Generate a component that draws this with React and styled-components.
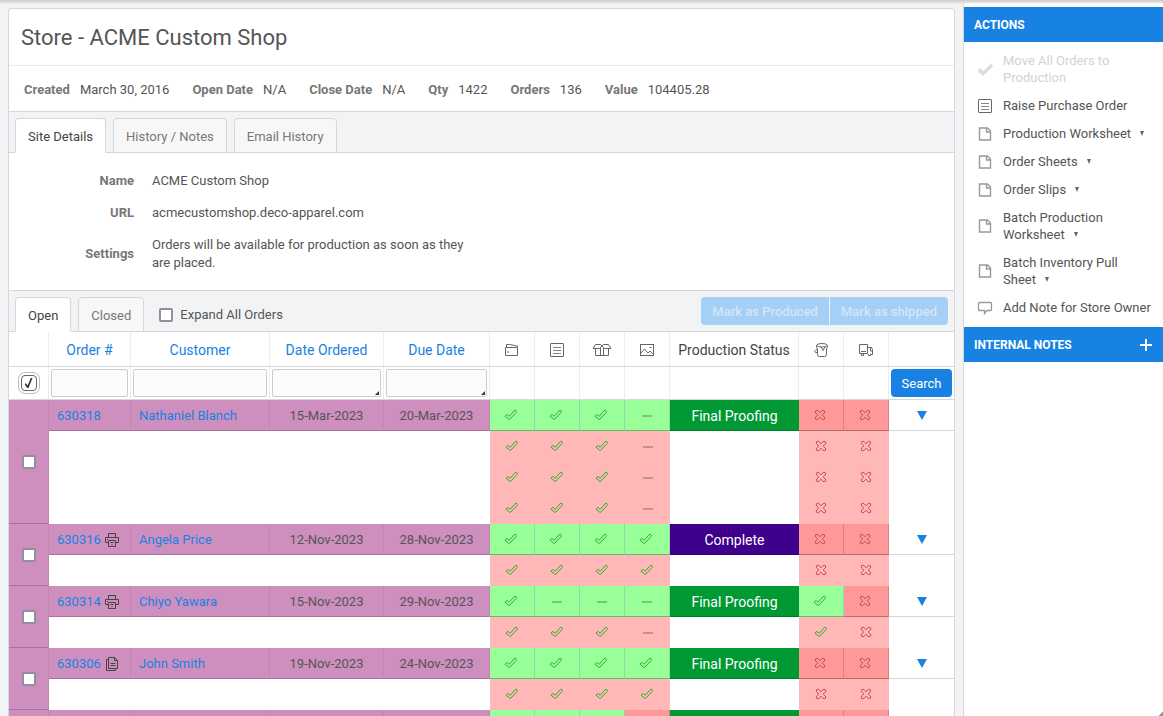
import React from "react";
import styled, { createGlobalStyle } from "styled-components";

const c = {
  page: "#f2f3f5",
  line: "#d5d7da",
  soft: "#ececee",
  text: "#555",
  label: "#777",
  blue: "#1882e3",
  purple: "#ce8fbe",
  green: "#99ff99",
  red: "#ff9999",
  pink: "#ffb7b7",
};

const GlobalStyle = createGlobalStyle`
  *, *::before, *::after { box-sizing: border-box; }
  body {
    margin: 0;
    background: ${c.page};
    color: ${c.text};
    font: 13px/18px Roboto, "Liberation Sans", sans-serif;
  }
  button, input { font: inherit; }
  a { color: ${c.blue}; text-decoration: none; }
`;

const Page = styled.div`
  display: flex;
  height: 100vh;
  overflow: hidden;
  position: relative;
`;

const TopShade = styled.div`
  position: absolute;
  inset: 0 0 auto 0;
  height: 4px;
  background: linear-gradient(#cdced0, #d6d7d9 40%, rgba(225, 226, 228, 0));
`;

const Corner = styled.div`
  position: absolute;
  right: 0;
  bottom: 0;
  width: 5px;
  height: 5px;
  background: linear-gradient(135deg, transparent 50%, #8c98a8 50%);
`;

const Main = styled.main`
  flex: 1;
  min-width: 0;
  padding: 8px 8px 0;
`;

const Panel = styled.section`
  background: #fff;
  border: 1px solid ${c.line};
  border-radius: 3px 3px 0 0;
`;

const Title = styled.h1`
  margin: 0;
  padding: 16px 12px 15px;
  font-size: 22px;
  line-height: 25px;
  font-weight: 400;
  border-bottom: 1px solid ${c.soft};
`;

const Summary = styled.dl`
  display: flex;
  gap: 23px;
  margin: 0;
  padding: 15px 15px 12px;
  border-bottom: 1px solid ${c.line};
`;

const SummaryItem = styled.div`
  display: flex;
  gap: 10px;
  dt { font-weight: 700; color: ${c.label}; }
  dd { margin: 0; }
`;

const TabBar = styled.div`
  display: flex;
  align-items: flex-end;
  gap: 7px;
  height: 41px;
  padding: 0 6px;
  background: ${c.page};
  border-bottom: 1px solid ${c.line};
`;

const Tab = styled.button`
  height: 35px;
  margin-bottom: -1px;
  padding: 3px 12px 0;
  border: 1px solid ${c.line};
  border-bottom-color: ${(p) => (p.$active ? "#fff" : c.line)};
  border-radius: 4px 4px 0 0;
  background: ${(p) => (p.$active ? "#fff" : "#f7f7f8")};
  color: ${(p) => (p.$active ? "#444" : c.label)};
`;

const ExpandLabel = styled.label`
  display: flex;
  align-items: center;
  align-self: center;
  gap: 7px;
  margin: 7px auto 0 8px;
`;

const Check = styled.input.attrs({ type: "checkbox" })`
  appearance: none;
  display: block;
  width: 14px;
  height: 14px;
  margin: 0;
  background: #fff;
  border: 2px solid #8f8f9d;
  border-radius: 2px;
`;

const SelectAll = styled(Check)`
  width: 16px;
  height: 16px;
  border: 1px solid #666;
  border-radius: 4px;
  outline: 1px solid #bbb;
  outline-offset: 2px;
  &:checked::after {
    content: "";
    display: block;
    width: 8px;
    height: 10px;
    margin: 2px 3px;
    background: #333;
    clip-path: polygon(78% 0, 100% 0, 50% 100%, 35% 100%, 0 62%, 18% 52%, 40% 75%);
  }
`;

const ButtonGroup = styled.div`
  display: flex;
  align-self: center;
  gap: 1px;
`;

const GroupButton = styled.button`
  height: 28px;
  padding: 2px 11px 0;
  border: 0;
  background: #a6cff5;
  color: #d0e6fa;
  font-weight: 500;
  &:first-child { border-radius: 4px 0 0 4px; }
  &:last-child { border-radius: 0 4px 4px 0; }
`;

const Details = styled.dl`
  margin: 0;
  padding: 12px 0 11px;
  border-bottom: 1px solid ${c.line};
`;

const DetailRow = styled.div`
  display: grid;
  grid-template-columns: 125px minmax(0, 330px);
  align-items: center;
  gap: 18px;
  padding: 7px 0;
  dt { text-align: right; font-weight: 700; color: ${c.label}; }
  dd { margin: 0; }
`;

const Table = styled.table`
  width: 100%;
  table-layout: fixed;
  border-collapse: separate;
  border-spacing: 0;
`;

const Head = styled.th`
  height: 35px;
  padding: 1px 0 0;
  font-size: 14px;
  font-weight: 400;
  color: #444;
  border-right: ${(p) => (p.$last ? 0 : 1)}px solid ${c.soft};
  border-bottom: 1px solid ${c.line};
  svg { display: block; margin: 0 auto; }
`;

const FilterCell = styled.td`
  height: 33px;
  padding: 2px;
  border-right: ${(p) => (p.$last ? 0 : 1)}px solid ${c.soft};
  border-bottom: 1px solid ${c.line};
  position: relative;
  ${SelectAll} { margin: 0 auto; }
`;

const FilterInput = styled.input`
  display: block;
  width: 100%;
  height: 28px;
  border: 1px solid #ccc;
  border-radius: 2px;
  background: #fcfcfc;
`;

const DateMark = styled.span`
  position: absolute;
  right: 4px;
  bottom: 4px;
  border: 2px solid #333;
  border-top-color: transparent;
  border-left-color: transparent;
`;

const SearchButton = styled.button`
  display: block;
  width: 61px;
  height: 28px;
  padding: 2px 0 0;
  border: 0;
  border-radius: 4px;
  background: ${c.blue};
  color: #fff;
`;

const PickCell = styled.td`
  padding: 0;
  background: ${c.purple};
  border-right: 1px solid rgba(0, 0, 0, 0.06);
  border-bottom: 1px solid rgba(0, 0, 0, 0.18);
  ${Check} { margin: 0 auto; }
`;

const Cell = styled.td`
  height: 31px;
  padding: 2px 8px 0;
  text-align: ${(p) => p.$align || "center"};
  background: ${(p) => p.$bg || "#fff"};
  border-right: 1px solid rgba(0, 0, 0, 0.06);
  border-bottom: 1px solid rgba(0, 0, 0, 0.18);
`;

const OrderRef = styled.span`
  display: flex;
  align-items: center;
  gap: 4px;
`;

const StatusCell = styled(Cell)`
  color: #fff;
  font-size: 14px;
  border-right: 0;
`;

const MarkCell = styled(Cell)`
  padding: 0;
  border-right-color: ${(p) => (p.$bg === c.red ? "rgba(0,0,0,0.15)" : "rgba(140,140,200,0.35)")};
  border-bottom-color: rgba(0, 0, 0, 0.28);
  svg { display: block; margin: 0 auto; }
`;

const ToggleCell = styled(Cell)`
  border-right: 0;
  border-bottom-color: ${c.line};
`;

const Toggle = styled.button`
  display: block;
  margin: 0 auto;
  padding: 0;
  border: 0;
  background: none;
  svg { display: block; }
`;

const SubCell = styled.td`
  height: 31px;
  padding: 0 0 1px;
  background: ${(p) => p.$bg || "#fff"};
  svg { display: block; margin: 0 auto; }
`;

const Side = styled.aside`
  flex: 0 0 200px;
  padding-top: 7px;
  background: #fff;
  border-left: 1px solid ${c.line};
`;

const SideHead = styled.h2`
  display: flex;
  align-items: center;
  justify-content: space-between;
  height: 35px;
  margin: 0;
  padding: 0 10px;
  background: ${c.blue};
  color: #fff;
  font-size: 12px;
  font-weight: 700;
`;

const AddButton = styled.button`
  padding: 0;
  border: 0;
  background: none;
  svg { display: block; }
`;

const ActionList = styled.ul`
  display: flex;
  flex-direction: column;
  gap: 11px;
  margin: 0;
  padding: 10px 10px 11px 13px;
  list-style: none;
`;

const Action = styled.button`
  display: flex;
  align-items: center;
  gap: 10px;
  width: 100%;
  padding: 0;
  border: 0;
  background: none;
  color: ${c.text};
  line-height: 17px;
  text-align: left;
  &:disabled { color: #d3d3d3; }
  svg { flex: none; }
`;

const Caret = styled.span`
  display: inline-block;
  margin: 0 0 2px 9px;
  border: 2px solid transparent;
  border-top: 5px solid #666;
  border-bottom: 0;
`;

const Icon = ({ w = 16, h = 16, color = "#666", children }) => (
  <svg width={w} height={h} viewBox={`0 0 ${w} ${h}`} fill="none" stroke={color} strokeWidth="1" aria-hidden="true">
    {children}
  </svg>
);

const CheckMark = () => (
  <Icon w={16} h={12} color="#27b327">
    <path d="M1 7.2 2.4 5.7Q3 5.3 3.6 5.8L5.2 7.3 10 1.8Q11 .8 12 1.6 12.9 2.6 12 3.6L6 10Q5.2 10.8 4.4 10L1 7.2Z" />
  </Icon>
);

const CrossMark = () => (
  <Icon w={14} h={12} color="#cf4b4b">
    <path d="M3 1.2Q3.8 1.2 6 3.800Q8.200 1.200 9 1.200Q10.800 1.200 10.800 3Q10.800 3.800 8.200 6Q10.800 8.200 10.800 9Q10.800 10.800 9 10.800Q8.200 10.800 6 8.200Q3.800 10.800 3 10.800Q1.200 10.800 1.200 9Q1.200 8.200 3.800 6Q1.200 3.800 1.200 3Q1.200 1.200 3 1.200Z" />
  </Icon>
);

const DashMark = () => (
  <Icon w={10} h={12} color="rgba(60,60,60,0.3)">
    <path d="M0 7h10" strokeWidth="2" />
  </Icon>
);

const marks = { y: <CheckMark />, n: <CrossMark />, "-": <DashMark /> };

const ListIcon = () => (
  <Icon>
    <rect x="1.5" y="1.5" width="13" height="13" rx="0.5" />
    <path d="M4 5.5h8M4 8.5h8M4 11.5h8" opacity="0.8" />
  </Icon>
);

const WalletIcon = () => (
  <Icon>
    <path d="M1.5 5.500h12v8h-12zM2.500 5.500v-3h3l8 1.500v1.500M3 10h2" />
  </Icon>
);

const BoxIcon = () => (
  <Icon w={20}>
    <path d="M3.500 7v6.500h13V7M8.500 5v8.500M11.500 5v8.500M3.500 2.500h5l1.500 1.500 1.500-1.500h5l2.500 4h-6.500L10 4 7.500 6.500H1z" />
  </Icon>
);

const ImageIcon = () => (
  <Icon>
    <rect x="1.500" y="2.500" width="13" height="11" />
    <path d="M2 11l3.500-4 3.500 4 2-2 3.500 3.500M10.500 5.500h2" />
  </Icon>
);

const JugIcon = () => (
  <Icon>
    <path d="M3.500 3.500v2l1 1.500v5.500q0 2 2 2h5q2 0 2-2V7l1-2.500v-1M3.500 3.500Q3.500 1.500 9 1.500t5.500 2q-2 1.500-5.500 1.500t-5.500-1.500M4.500 7l-3 2.500 1 1h2M8 5l2 3.500 2-3.500" />
  </Icon>
);

const TruckIcon = () => (
  <Icon>
    <path d="M1.500 2.500h8v9h-8zM9.500 5.500h4l1 2v5h-2M12.500 6v3h2M3 9.500h5" />
    <path d="M3.500 12v1.500h2V12M10.500 12v1.500h2V12" />
  </Icon>
);

const PrinterIcon = () => (
  <Icon w={14} h={14} color="#444">
    <path d="M3.500 4.500v-4h7v4M3.500 9.500h-3v-5h13v5h-3M3.500 7.500h7v6h-7zM2 6.500h1M5.500 9.500h3M6.500 11.500h1" />
  </Icon>
);

const CopyIcon = () => (
  <Icon w={14} h={14} color="#444">
    <path d="M3.500.5h6l3 3v8h-9zM9.500.5v3h3M3.500 2.500h-2v11h9v-2M5.500 6.500h5M5.500 8.500h5" />
  </Icon>
);

const PageIcon = () => (
  <Icon color="#999">
    <path d="M2.500 2h8l3 3v9h-11zM9.500 2v4h4" strokeWidth="1.400" />
  </Icon>
);

const NoteIcon = () => (
  <Icon color="#999">
    <path d="M2.500 2.500h11q1 0 1 1v6q0 1-1 1H10l-2.500 3v-3h-5q-1 0-1-1v-6q0-1 1-1Z" strokeWidth="1.300" />
  </Icon>
);

const DoneIcon = () => (
  <Icon color="#dcdcdc">
    <path d="M2 8.500l4 4L15 4" strokeWidth="3.500" />
  </Icon>
);

const summary = [
  ["Created", "March 30, 2016"],
  ["Open Date", "N/A"],
  ["Close Date", "N/A"],
  ["Qty", "1422"],
  ["Orders", "136"],
  ["Value", "104405.28"],
];

const details = [
  ["Name", "ACME Custom Shop"],
  ["URL", "acmecustomshop.deco-apparel.com"],
  ["Settings", "Orders will be available for production as soon as they are placed."],
];

const columns = [40, 82, null, 114, 106, 45, 45, 45, 45, 129, 45, 45, 65];

const PROOF = ["Final Proofing", "#009933"];
const DONE = ["Complete", "#3f008c"];

const orders = [
  { id: "630318", name: "Nathaniel Blanch", from: "15-Mar-2023", due: "20-Mar-2023", marks: "yyy-nn", good: "111100", status: PROOF, items: ["yyy-nn", "yyy-nn", "yyy-nn"] },
  { id: "630316", icon: <PrinterIcon />, name: "Angela Price", from: "12-Nov-2023", due: "28-Nov-2023", marks: "yyyynn", good: "111100", status: DONE, items: ["yyyynn"] },
  { id: "630314", icon: <PrinterIcon />, name: "Chiyo Yawara", from: "15-Nov-2023", due: "29-Nov-2023", marks: "y---yn", good: "111110", status: PROOF, items: ["yyy-yn"] },
  { id: "630306", icon: <CopyIcon />, name: "John Smith", from: "19-Nov-2023", due: "24-Nov-2023", marks: "yyyynn", good: "111100", status: PROOF, items: ["yyyynn"] },
  { marks: "      ", good: "111000", status: ["", "#009933"], items: [] },
];

const actions = [
  [<DoneIcon />, "Move All Orders to Production", false, true],
  [<ListIcon />, "Raise Purchase Order"],
  [<PageIcon />, "Production Worksheet", true],
  [<PageIcon />, "Order Sheets", true],
  [<PageIcon />, "Order Slips", true],
  [<PageIcon />, "Batch Production Worksheet", true],
  [<PageIcon />, "Batch Inventory Pull Sheet", true],
  [<NoteIcon />, "Add Note for Store Owner"],
];

function OrderGroup({ order }) {
  const markCell = (i) => (
    <MarkCell key={i} $bg={order.good[i] === "1" ? c.green : c.red}>{marks[order.marks[i]]}</MarkCell>
  );
  return (
    <tbody>
      <tr>
        <PickCell rowSpan={order.items.length + 1}>
          {order.id && <Check aria-label={`Select order ${order.id}`} />}
        </PickCell>
        <Cell $bg={c.purple} $align="left">
          <OrderRef>
            {order.id && <a href="#order">{order.id}</a>}
            {order.icon}
          </OrderRef>
        </Cell>
        <Cell $bg={c.purple} $align="left">{order.name && <a href="#customer">{order.name}</a>}</Cell>
        <Cell $bg={c.purple}>{order.from}</Cell>
        <Cell $bg={c.purple}>{order.due}</Cell>
        {[0, 1, 2, 3].map(markCell)}
        <StatusCell $bg={order.status[1]}>{order.status[0]}</StatusCell>
        {[4, 5].map(markCell)}
        <ToggleCell>
          {order.id && (
            <Toggle aria-label="Expand order">
              <svg width="10" height="10" viewBox="0 0 10 10" fill={c.blue}><path d="M0 0h10L5 9z" /></svg>
            </Toggle>
          )}
        </ToggleCell>
      </tr>
      {order.items.map((item, r) => (
        <tr key={r}>
          <SubCell colSpan={4} />
          {[0, 1, 2, 3].map((i) => <SubCell key={i} $bg={c.pink}>{marks[item[i]]}</SubCell>)}
          <SubCell />
          {[4, 5].map((i) => <SubCell key={i} $bg={c.pink}>{marks[item[i]]}</SubCell>)}
          <SubCell />
        </tr>
      ))}
    </tbody>
  );
}

export default function App() {
  return (
    <>
      <GlobalStyle />
      <Page>
        <Main>
          <Panel>
            <Title>Store - ACME Custom Shop</Title>
            <Summary>
              {summary.map(([k, v]) => <SummaryItem key={k}><dt>{k}</dt><dd>{v}</dd></SummaryItem>)}
            </Summary>
            <TabBar>
              <Tab $active>Site Details</Tab>
              <Tab>History / Notes</Tab>
              <Tab>Email History</Tab>
            </TabBar>
            <Details>
              {details.map(([k, v]) => <DetailRow key={k}><dt>{k}</dt><dd>{v}</dd></DetailRow>)}
            </Details>
            <TabBar>
              <Tab $active>Open</Tab>
              <Tab>Closed</Tab>
              <ExpandLabel><Check />Expand All Orders</ExpandLabel>
              <ButtonGroup>
                <GroupButton disabled>Mark as Produced</GroupButton>
                <GroupButton disabled>Mark as shipped</GroupButton>
              </ButtonGroup>
            </TabBar>
            <Table>
              <colgroup>
                {columns.map((w, i) => <col key={i} width={w || undefined} />)}
              </colgroup>
              <thead>
                <tr>
                  <Head />
                  <Head><a href="#sort-order">Order #</a></Head>
                  <Head><a href="#sort-customer">Customer</a></Head>
                  <Head><a href="#sort-ordered">Date Ordered</a></Head>
                  <Head><a href="#sort-due">Due Date</a></Head>
                  <Head><WalletIcon /></Head>
                  <Head><ListIcon /></Head>
                  <Head><BoxIcon /></Head>
                  <Head><ImageIcon /></Head>
                  <Head>Production Status</Head>
                  <Head><JugIcon /></Head>
                  <Head><TruckIcon /></Head>
                  <Head $last />
                </tr>
                <tr>
                  <FilterCell><SelectAll defaultChecked aria-label="Select all orders" /></FilterCell>
                  <FilterCell><FilterInput aria-label="Order number" /></FilterCell>
                  <FilterCell><FilterInput aria-label="Customer" /></FilterCell>
                  <FilterCell><FilterInput aria-label="Date ordered" /><DateMark /></FilterCell>
                  <FilterCell><FilterInput aria-label="Due date" /><DateMark /></FilterCell>
                  {[0, 1, 2, 3, 4, 5, 6].map((i) => <FilterCell key={i} />)}
                  <FilterCell $last><SearchButton>Search</SearchButton></FilterCell>
                </tr>
              </thead>
              {orders.map((o, i) => <OrderGroup key={i} order={o} />)}
            </Table>
          </Panel>
        </Main>
        <Side>
          <SideHead>ACTIONS</SideHead>
          <ActionList>
            {actions.map(([icon, text, menu, off]) => (
              <li key={text}>
                <Action disabled={off}>{icon}<span>{text}{menu && <Caret />}</span></Action>
              </li>
            ))}
          </ActionList>
          <SideHead>
            INTERNAL NOTES
            <AddButton aria-label="Add note">
              <svg width="14" height="14" viewBox="0 0 14 14" stroke="#fff" strokeWidth="2"><path d="M7 1v12M1 7h12" /></svg>
            </AddButton>
          </SideHead>
        </Side>
        <TopShade />
        <Corner />
      </Page>
    </>
  );
}
